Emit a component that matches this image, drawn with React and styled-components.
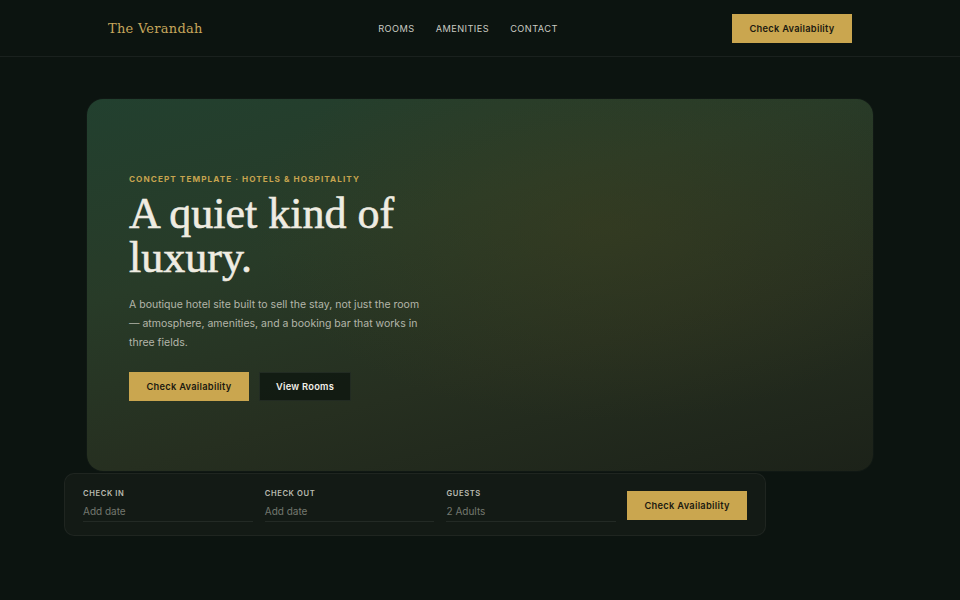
import styled, { createGlobalStyle } from "styled-components";

const GlobalStyle = createGlobalStyle`
  html, body {
    margin: 0;
    padding: 0;
    background: #0c1410;
  }
  body {
    font-family: Inter, "Noto Sans", sans-serif;
    color: #e8e6dc;
    -webkit-font-smoothing: antialiased;
  }
  * {
    box-sizing: border-box;
  }
`;

const Page = styled.div`
  min-height: 600px;
  background: #0c1410;
`;

const Header = styled.header`
  height: 57px;
  padding: 0 108px;
  display: flex;
  align-items: center;
  justify-content: space-between;
  border-bottom: 1px solid rgba(255, 255, 255, 0.06);
`;

const Logo = styled.div`
  font-family: "DejaVu Serif", "Liberation Serif", serif;
  font-size: 13px;
  letter-spacing: 0.02em;
  color: #c7a75c;
  width: 96px;
  white-space: nowrap;
`;

const Nav = styled.nav`
  display: flex;
  gap: 21px;

  a {
    font-size: 9.2px;
    letter-spacing: 0.05em;
    color: #c9cbc2;
    text-decoration: none;
  }
`;

const Button = styled.button`
  height: 29px;
  padding: 0;
  border: 1px solid ${(p) => (p.$ghost ? "rgba(255,255,255,0.07)" : "#caa64f")};
  background: ${(p) => (p.$ghost ? "rgba(10,18,13,0.7)" : "#caa64f")};
  color: ${(p) => (p.$ghost ? "#f2f0e8" : "#1c1a10")};
  font-family: Inter, sans-serif;
  font-size: 9.3px;
  font-weight: 600;
  letter-spacing: 0.03em;
  cursor: pointer;
  white-space: nowrap;
  width: ${(p) => (p.$w ? `${p.$w}px` : "auto")};
`;

const Main = styled.main`
  padding-top: 42px;
`;

const Hero = styled.section`
  margin-left: 87px;
  width: 786px;
  height: 372px;
  border-radius: 16px;
  padding: 75px 42px 0;
  background:
    radial-gradient(ellipse 60% 70% at 66% 34%, rgba(62, 62, 30, 0.5), transparent 75%),
    linear-gradient(165deg, #22402f 0%, #283b28 35%, #262f20 65%, #1c2219 100%);
  box-shadow: 0 0 0 1px rgba(255, 255, 255, 0.02);
`;

const Eyebrow = styled.div`
  font-size: 8.2px;
  font-weight: 700;
  letter-spacing: 0.13em;
  color: #c7a44f;
`;

const Title = styled.h1`
  margin: 8px 0 0;
  font-family: "Liberation Serif", serif;
  font-weight: 400;
  font-size: 44px;
  line-height: 44px;
  color: #efece2;
  -webkit-text-stroke: 0.6px #efece2;
`;

const Lead = styled.p`
  margin: 15px 0 0;
  max-width: 300px;
  font-size: 10.5px;
  line-height: 19px;
  color: #b4b6aa;
`;

const Actions = styled.div`
  display: flex;
  gap: 10px;
  margin-top: 20px;
`;

const BookingBar = styled.form`
  margin: 2px 0 0 64px;
  width: 702px;
  height: 63px;
  border-radius: 10px;
  background: #131a15;
  border: 1px solid rgba(255, 255, 255, 0.05);
  padding: 0 18px;
  display: flex;
  align-items: center;
  gap: 12px;
`;

const Field = styled.label`
  width: 170px;
  display: flex;
  flex-direction: column;
  border-bottom: 1px solid rgba(255, 255, 255, 0.07);
  padding-bottom: 4px;
  margin-top: 1px;

  span {
    font-size: 7.6px;
    font-weight: 600;
    letter-spacing: 0.08em;
    color: #b9bbb0;
  }

  em {
    margin-top: 7px;
    font-style: normal;
    font-size: 10px;
    color: #74786f;
  }
`;

const BarButton = styled(Button)`
  margin-left: -1px;
  margin-top: 1px;
`;

const fields = [
  { label: "CHECK IN", value: "Add date" },
  { label: "CHECK OUT", value: "Add date" },
  { label: "GUESTS", value: "2 Adults" },
];

export default function App() {
  return (
    <>
      <GlobalStyle />
      <Page>
        <Header>
          <Logo>The Verandah</Logo>
          <Nav>
            <a href="#rooms">ROOMS</a>
            <a href="#amenities">AMENITIES</a>
            <a href="#contact">CONTACT</a>
          </Nav>
          <Button $w={120}>Check Availability</Button>
        </Header>

        <Main>
          <Hero>
            <Eyebrow>CONCEPT TEMPLATE · HOTELS &amp; HOSPITALITY</Eyebrow>
            <Title>
              A quiet kind of
              <br />
              luxury.
            </Title>
            <Lead>
              A boutique hotel site built to sell the stay, not just the room
              — atmosphere, amenities, and a booking bar that works in three
              fields.
            </Lead>
            <Actions>
              <Button $w={120}>Check Availability</Button>
              <Button $ghost $w={92}>View Rooms</Button>
            </Actions>
          </Hero>

          <BookingBar onSubmit={(e) => e.preventDefault()}>
            {fields.map((f) => (
              <Field key={f.label}>
                <span>{f.label}</span>
                <em>{f.value}</em>
              </Field>
            ))}
            <BarButton $w={120}>Check Availability</BarButton>
          </BookingBar>
        </Main>
      </Page>
    </>
  );
}
